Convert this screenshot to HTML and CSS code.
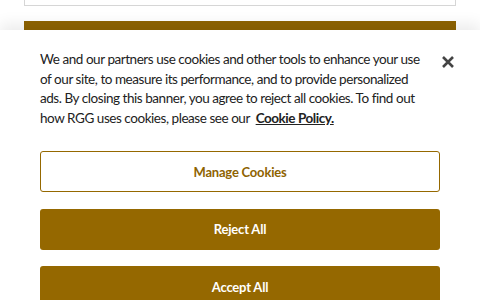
FILE: index.html
```html
<!DOCTYPE html>
<html lang="en">
<head>
    <meta charset="UTF-8">
    <meta name="viewport" content="width=device-width, initial-scale=1.0">
    <title>Cookie Banner</title>
    <link rel="stylesheet" href="styles.css">
</head>
<body>
    <div class="page">
        <div class="search-box"></div>
        <div class="brand-bar"></div>
    </div>

    <div class="cookie-banner">
        <div class="banner-top">
            <p class="banner-text">We and our partners use cookies and other tools to enhance your use of our site, to measure its performance, and to provide personalized ads. By closing this banner, you agree to reject all cookies. To find out how RGG uses cookies, please see our <a href="#" class="policy-link">Cookie Policy.</a></p>
            <button class="close-btn" aria-label="Close">
                <svg width="14" height="14" viewBox="0 0 14 14">
                    <path d="M2 2 L12 12 M12 2 L2 12" stroke="#444" stroke-width="2.6" stroke-linecap="butt"/>
                </svg>
            </button>
        </div>
        <div class="banner-actions">
            <button class="btn btn-outline">Manage Cookies</button>
            <button class="btn btn-solid">Reject All</button>
            <button class="btn btn-solid">Accept All</button>
        </div>
    </div>
</body>
</html>
```

FILE: styles.css
```css
body {
    margin: 0;
    padding: 0;
    font-family: Lato, "Open Sans", Arial, sans-serif;
    background-color: #fff;
    color: #222;
    overflow: hidden;
}
.page {
    padding: 0 24px;
}
.search-box {
    height: 5px;
    border: 1px solid #d6d6d6;
    border-top: none;
}
.brand-bar {
    margin-top: 15px;
    height: 20px;
    background-color: #8e6300;
}
.cookie-banner {
    position: absolute;
    top: 30px;
    left: 0;
    right: 0;
    background-color: #fff;
    padding: 20px 40px 0;
    box-shadow: 0 -6px 14px rgba(0, 0, 0, 0.08);
}
.banner-top {
    display: flex;
    align-items: flex-start;
}
.banner-text {
    margin: 0;
    width: 384px;
    flex-shrink: 0;
    font-size: 13.5px;
    letter-spacing: -0.45px;
    line-height: 19.5px;
    color: #222;
}
.policy-link {
    margin-left: 3px;
    font-weight: 700;
    color: #222;
    text-decoration: underline;
}
.close-btn {
    margin-left: auto;
    margin-top: 5px;
    margin-right: -15px;
    padding: 0;
    border: none;
    background: none;
    cursor: pointer;
    line-height: 0;
}
.banner-actions {
    display: flex;
    flex-direction: column;
    gap: 16.5px;
    margin-top: 23px;
}
.btn {
    height: 41px;
    border-radius: 3px;
    font-family: inherit;
    font-size: 13px;
    letter-spacing: -0.2px;
    font-weight: 700;
    cursor: pointer;
}
.btn-outline {
    background-color: #fff;
    border: 1px solid #956800;
    color: #8e6300;
}
.btn-solid {
    background-color: #956800;
    border: none;
    color: #fff;
}
```
